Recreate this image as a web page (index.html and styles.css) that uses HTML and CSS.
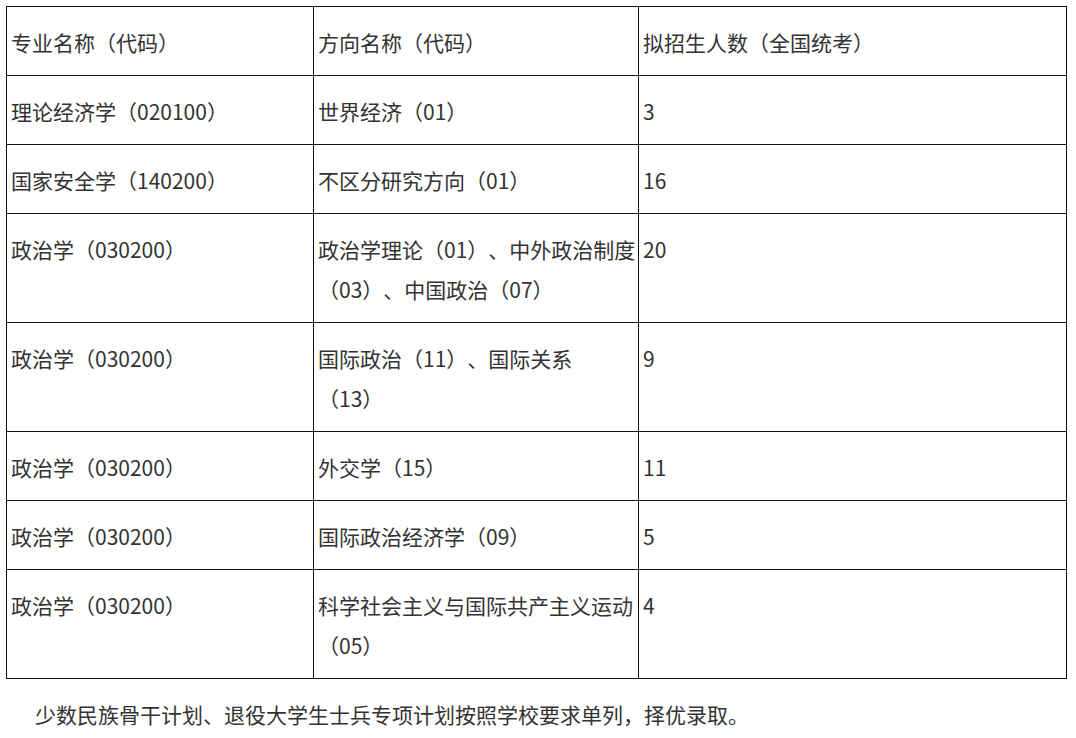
FILE: index.html
```html
<!DOCTYPE html>
<html lang="zh-CN">
<head>
<meta charset="utf-8">
<title>招生计划</title>
<link rel="stylesheet" href="styles.css">
</head>
<body>
<div class="page">
  <table class="plan">
    <colgroup>
      <col class="c1">
      <col class="c2">
      <col class="c3">
    </colgroup>
    <tbody>
      <tr><td>专业名称（代码）</td><td>方向名称（代码）</td><td>拟招生人数（全国统考）</td></tr>
      <tr><td>理论经济学（020100）</td><td>世界经济（01）</td><td>3</td></tr>
      <tr><td>国家安全学（140200）</td><td>不区分研究方向（01）</td><td>16</td></tr>
      <tr><td>政治学（030200）</td><td>政治学理论（01）、中外政治制度（03）、中国政治（07）</td><td>20</td></tr>
      <tr><td>政治学（030200）</td><td>国际政治（11）、国际关系<br>（13）</td><td>9</td></tr>
      <tr><td>政治学（030200）</td><td>外交学（15）</td><td>11</td></tr>
      <tr><td>政治学（030200）</td><td>国际政治经济学（09）</td><td>5</td></tr>
      <tr><td>政治学（030200）</td><td>科学社会主义与国际共产主义运动（05）</td><td>4</td></tr>
    </tbody>
  </table>
  <p class="note">少数民族骨干计划、退役大学生士兵专项计划按照学校要求单列，择优录取。</p>
</div>
</body>
</html>
```

FILE: styles.css
```css
html, body {
  margin: 0;
  padding: 0;
  background: #ffffff;
}
body {
  font-family: "Noto Sans CJK SC", "Noto Sans", sans-serif;
  font-size: 21px;
  color: #333333;
  text-spacing-trim: space-all;
}
.page {
  padding: 6px 10px 0 6px;
}
.plan {
  border-collapse: collapse;
  table-layout: fixed;
  width: 1060px;
}
.c1 { width: 307px; }
.c2 { width: 325px; }
.c3 { width: 428px; }
.plan td {
  border: 1px solid #111111;
  padding: 15px 0 13px 4px;
  line-height: 40px;
  vertical-align: top;
  word-break: break-all;
}
.note {
  margin: 15px 0 0 29px;
  line-height: 40px;
}
```
